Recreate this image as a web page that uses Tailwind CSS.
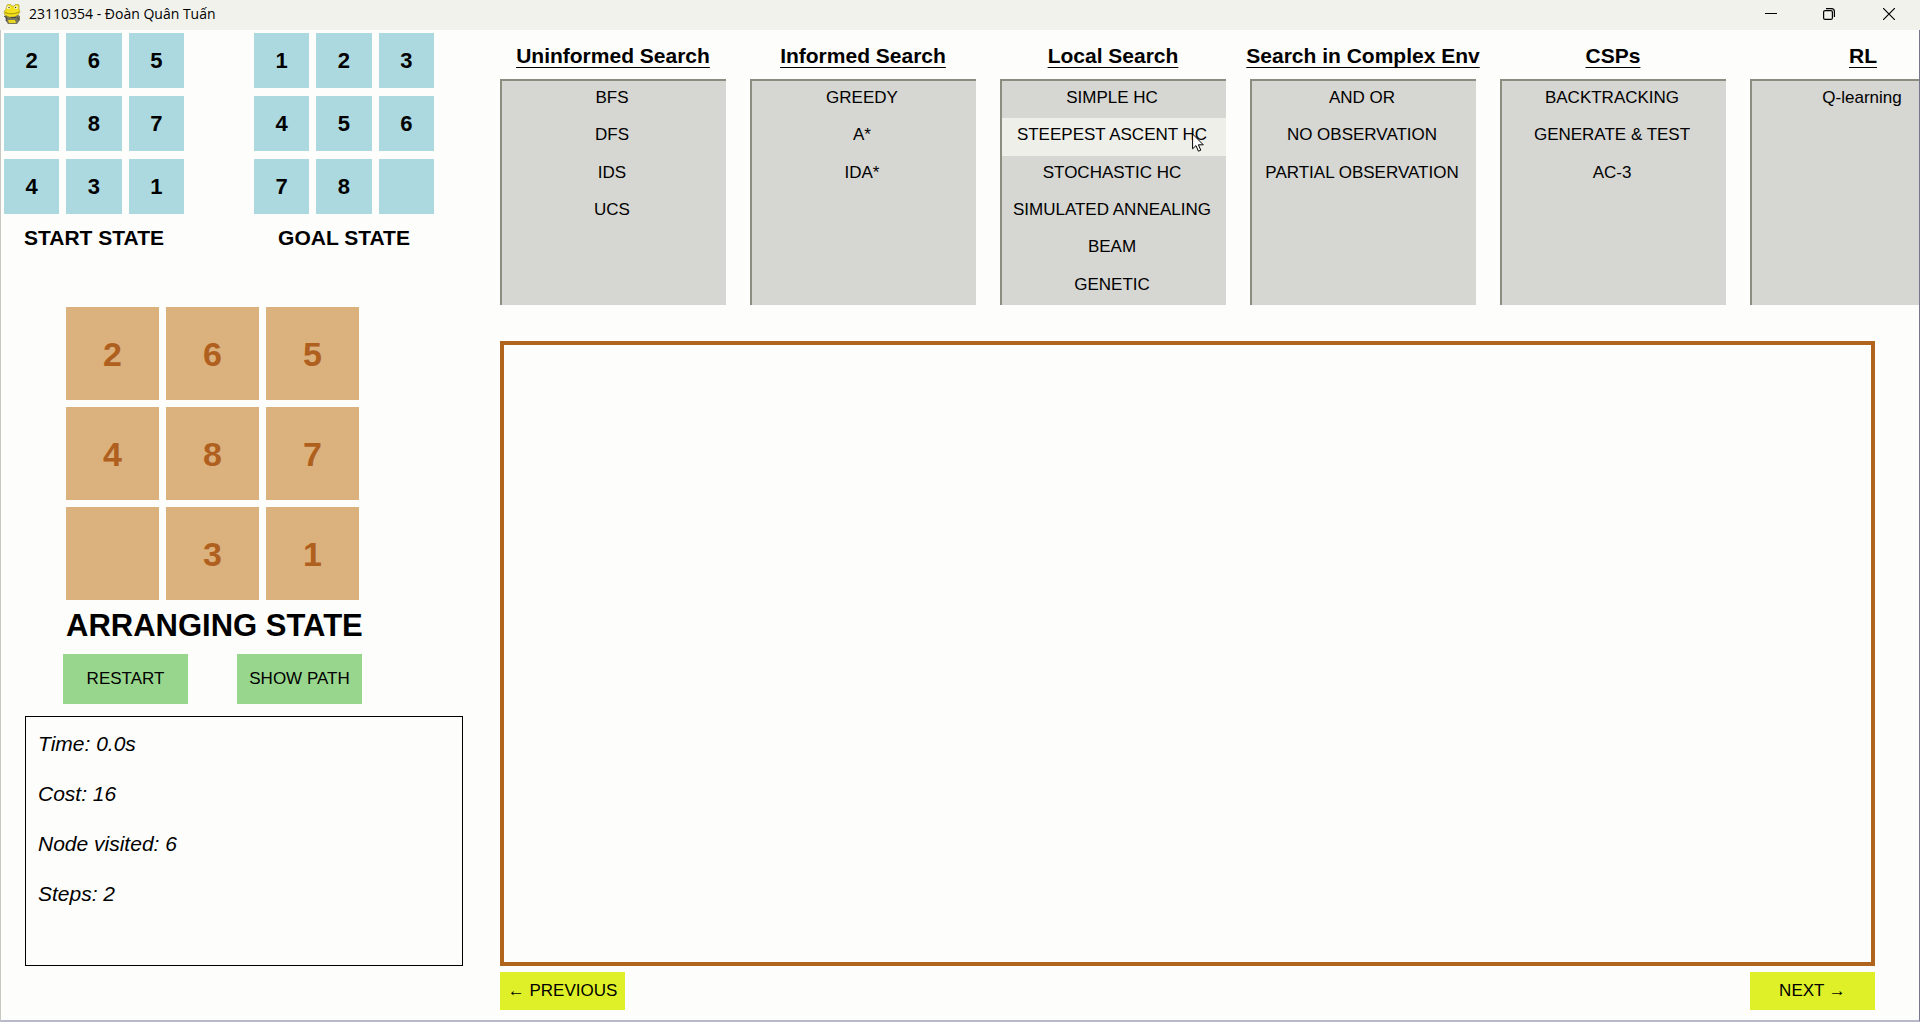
<!DOCTYPE html>
<html lang="en">
<head>
<meta charset="utf-8">
<title>23110354 - Đoàn Quân Tuấn</title>
<script src="https://cdn.jsdelivr.net/npm/@tailwindcss/browser@4"></script>
</head>
<body class="min-h-screen flex flex-col overflow-x-hidden bg-[#fdfdfb] text-black font-['Liberation_Sans',Arial,sans-serif]">

<header class="h-[30px] shrink-0 flex items-center justify-between bg-[#f2f2ec] pl-[3px] font-['Open_Sans','Noto_Sans',sans-serif]">
  <div class="flex items-center gap-2 pb-[2px]">
    <svg class="w-[18px] h-5" viewBox="0 0 18 20" aria-hidden="true">
      <path d="M2 12l2-2h9l4 2v4l-3 4H5l-2-3z" fill="#77755f"/>
      <path d="M4 1l3-1 2 2h2l2-2 3 1v4l1 3-2 3-4 2H6l-4-2-1-3 2-3z" fill="#f2e21c" stroke="#9a9020" stroke-width=".6"/>
      <circle cx="5.5" cy="3.500" r="1.800" fill="#fff8c0"/><circle cx="13" cy="3.500" r="1.800" fill="#fff8c0"/>
      <circle cx="6" cy="3.500" r=".7" fill="#333"/><circle cx="12.600" cy="3.500" r=".7" fill="#333"/>
      <path d="M2 8.500q7 3 14-.5" stroke="#a89010" fill="none"/>
      <path d="M5 16h7l1 3H6z" fill="#e6d820"/>
      <path d="M1 12l3 2-1 3M14 13l2 3M8 13.500h5" stroke="#444" fill="none"/>
    </svg>
    <h1 class="text-sm leading-5">23110354 - Đoàn Quân Tuấn</h1>
  </div>
  <div class="flex pb-[2px]">
    <button aria-label="Minimize" class="w-[58px] h-7 flex items-center justify-center"><svg class="w-3 h-3" viewBox="0 0 12 12" fill="none" stroke="#000"><path d="M0 5.5h12"/></svg></button>
    <button aria-label="Restore" class="w-[58px] h-7 flex items-center justify-center"><svg class="w-3 h-3" viewBox="0 0 12 12" fill="none" stroke="#000" stroke-width="1.2"><rect x=".6" y="2.6" width="8.8" height="8.8" rx="1.5"/><path d="M3 .6h5.500q2.900 0 2.900 2.900V9"/></svg></button>
    <button aria-label="Close" class="w-[62px] h-7 flex items-center justify-center"><svg class="w-3 h-3" viewBox="0 0 12 12" fill="none" stroke="#000" stroke-width="1.2"><path d="M0 0l12 12M12 0L0 12"/></svg></button>
  </div>
</header>

<main class="grow flex border-l border-r border-l-[#c8c8c0] border-r-[#777790] border-b-2 border-b-[#b8b8cc]">
  <aside class="w-[499px] shrink-0 pt-[3px] pl-[3px]">
    <div class="flex gap-[70px]">
      <section class="w-[180px]">
        <div id="start" class="grid grid-cols-3 gap-x-[7px] gap-y-2 text-[22px] leading-6 font-bold"></div>
        <h2 class="mt-2 text-[21px] leading-8 font-bold text-center">START STATE</h2>
      </section>
      <section class="w-[180px]">
        <div id="goal" class="grid grid-cols-3 gap-x-[7px] gap-y-2 text-[22px] leading-6 font-bold"></div>
        <h2 class="mt-2 text-[21px] leading-8 font-bold text-center">GOAL STATE</h2>
      </section>
    </div>
    <section class="mt-[53px] ml-[62px] w-[293px]">
      <div id="arranging" class="grid grid-cols-3 gap-[7px] text-[34px] leading-9 font-bold text-[#b0601e]"></div>
      <h2 class="mt-1 text-[31px] leading-[44px] font-bold text-center whitespace-nowrap">ARRANGING STATE</h2>
    </section>
    <div class="mt-[6px] ml-[59px] flex gap-[49px] text-[17px]">
      <button class="w-[125px] h-[50px] bg-[#98d68e]">RESTART</button>
      <button class="w-[125px] h-[50px] bg-[#98d68e]">SHOW PATH</button>
    </div>
    <div class="mt-3 ml-[21px] w-[438px] h-[250px] border border-black pl-3 pt-[2px] text-[21px] leading-[50px] italic">
      <p>Time: 0.0s</p>
      <p>Cost: 16</p>
      <p>Node visited: 6</p>
      <p>Steps: 2</p>
    </div>
  </aside>

  <div class="grow min-w-0 flex flex-col pb-[10px]">
    <nav id="groups" class="flex gap-6 overflow-hidden pt-[10px]"></nav>
    <section aria-label="Path view" class="mt-9 mr-11 grow border-4 border-[#b1641c]"></section>
    <div class="mt-[6px] mr-11 flex justify-between text-[17px]">
      <button class="w-[125px] h-[38px] bg-[#dff028] whitespace-nowrap">← PREVIOUS</button>
      <button class="w-[125px] h-[38px] bg-[#dff028] whitespace-nowrap">NEXT →</button>
    </div>
  </div>
</main>

<svg class="absolute left-[1192px] top-[133px] w-3 h-[19px]" viewBox="0 0 12 19" aria-hidden="true"><path d="M.6 1v14.8l3.400-3.200 2.400 5.600 2.400-1-2.400-5.400h4.900z" fill="#fff" stroke="#000"/></svg>

<script>
  const tiles = (id, digits, cls) => {
    document.getElementById(id).innerHTML = [...digits].map(d =>
      `<div class="${cls} flex items-center justify-center">${d === '0' ? '' : d}</div>`).join('');
  };
  tiles('start', '265087431', 'h-[55px] bg-[#acd9df]');
  tiles('goal', '123456780', 'h-[55px] bg-[#acd9df]');
  tiles('arranging', '265487031', 'h-[93px] bg-[#dbb27e]');

  const groups = [
    ['Uninformed Search', ['BFS', 'DFS', 'IDS', 'UCS']],
    ['Informed Search', ['GREEDY', 'A*', 'IDA*']],
    ['Local Search', ['SIMPLE HC', 'STEEPEST ASCENT HC', 'STOCHASTIC HC', 'SIMULATED ANNEALING', 'BEAM', 'GENETIC']],
    ['Search in Complex Env', ['AND OR', 'NO OBSERVATION', 'PARTIAL OBSERVATION']],
    ['CSPs', ['BACKTRACKING', 'GENERATE &amp; TEST', 'AC-3']],
    ['RL', ['Q-learning']],
  ];
  const active = 'STEEPEST ASCENT HC';
  document.getElementById('groups').innerHTML = groups.map(([name, items]) => `
    <section class="w-[226px] shrink-0">
      <h2 class="flex justify-center text-[21px] leading-8 font-bold whitespace-nowrap underline decoration-1 underline-offset-4">${name}</h2>
      <div class="mt-[7px] h-[226px] border-t-2 border-l-2 border-[#8c8c80] bg-[#d6d6d2] grid grid-rows-6 text-[17px]">
        ${items.map(i => `<button class="${i === active ? 'bg-[#efefea]' : ''} pr-1 pb-1 whitespace-nowrap">${i}</button>`).join('')}
      </div>
    </section>`).join('');
</script>
</body>
</html>
